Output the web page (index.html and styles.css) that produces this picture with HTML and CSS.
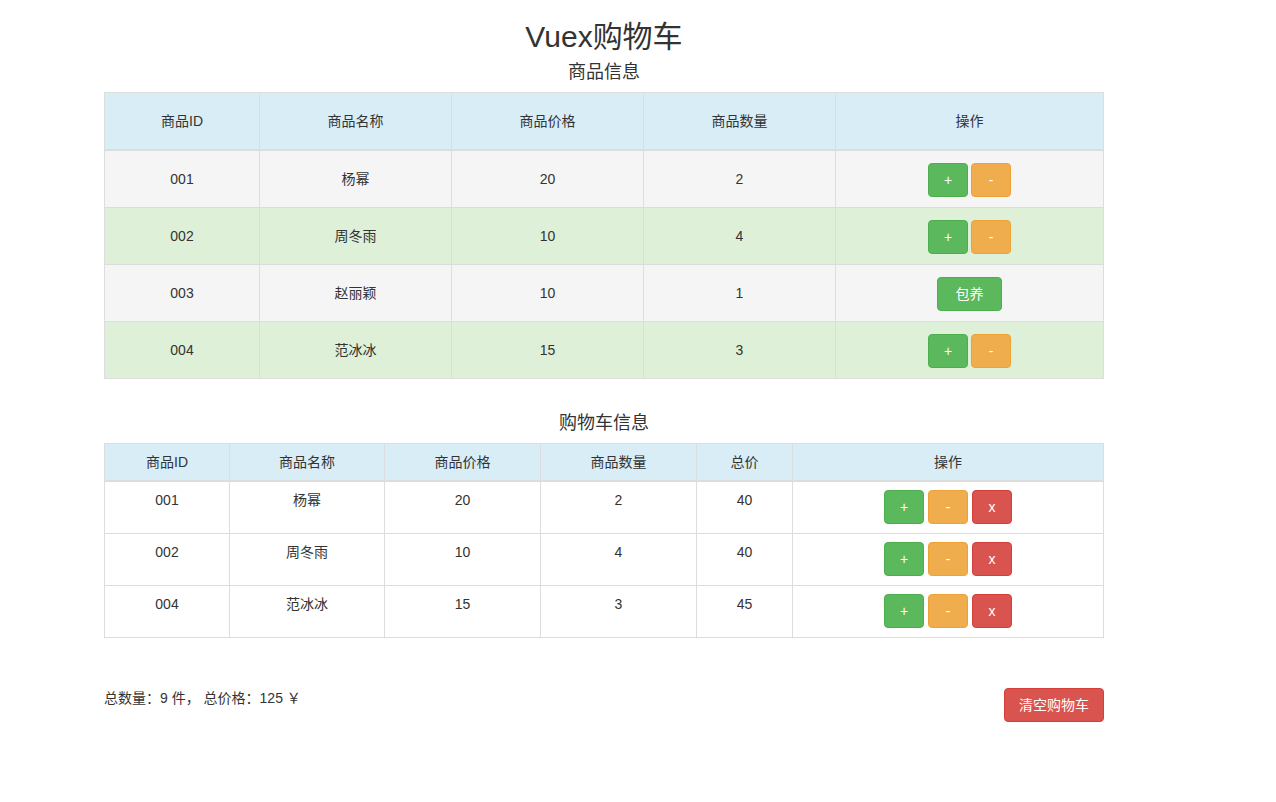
FILE: index.html
```html
<!DOCTYPE html>
<html lang="zh-CN">
<head>
<meta charset="utf-8">
<title>Vuex购物车</title>
<link rel="stylesheet" href="styles.css">
</head>
<body>
<div class="container">
  <h2 class="title">Vuex购物车</h2>
  <h4 class="sub">商品信息</h4>
  <table class="tbl goods">
    <colgroup>
      <col class="g1"><col class="g2"><col class="g3"><col class="g4"><col class="g5">
    </colgroup>
    <thead>
      <tr class="info"><th>商品ID</th><th>商品名称</th><th>商品价格</th><th>商品数量</th><th>操作</th></tr>
    </thead>
    <tbody>
      <tr class="active"><td>001</td><td>杨幂</td><td>20</td><td>2</td><td><div class="ops ops3"><button class="btn btn-success sq">+</button><button class="btn btn-warning sq">-</button></div></td></tr>
      <tr class="success"><td>002</td><td>周冬雨</td><td>10</td><td>4</td><td><div class="ops ops3"><button class="btn btn-success sq">+</button><button class="btn btn-warning sq">-</button></div></td></tr>
      <tr class="active"><td>003</td><td>赵丽颖</td><td>10</td><td>1</td><td><div class="ops ops3"><button class="btn btn-success wide">包养</button></div></td></tr>
      <tr class="success"><td>004</td><td>范冰冰</td><td>15</td><td>3</td><td><div class="ops ops3"><button class="btn btn-success sq">+</button><button class="btn btn-warning sq">-</button></div></td></tr>
    </tbody>
  </table>

  <h4 class="sub sub2">购物车信息</h4>
  <table class="tbl cart">
    <colgroup>
      <col class="c1"><col class="c2"><col class="c3"><col class="c4"><col class="c5"><col class="c6">
    </colgroup>
    <thead>
      <tr class="info"><th>商品ID</th><th>商品名称</th><th>商品价格</th><th>商品数量</th><th>总价</th><th>操作</th></tr>
    </thead>
    <tbody>
      <tr><td>001</td><td>杨幂</td><td>20</td><td>2</td><td>40</td><td><div class="ops"><button class="btn btn-success sq">+</button><button class="btn btn-warning sq">-</button><button class="btn btn-danger sq">x</button></div></td></tr>
      <tr><td>002</td><td>周冬雨</td><td>10</td><td>4</td><td>40</td><td><div class="ops"><button class="btn btn-success sq">+</button><button class="btn btn-warning sq">-</button><button class="btn btn-danger sq">x</button></div></td></tr>
      <tr><td>004</td><td>范冰冰</td><td>15</td><td>3</td><td>45</td><td><div class="ops"><button class="btn btn-success sq">+</button><button class="btn btn-warning sq">-</button><button class="btn btn-danger sq">x</button></div></td></tr>
    </tbody>
  </table>

  <div class="footer">
    <span class="summary">总数量：9 件， 总价格：125 ￥</span>
    <button class="btn btn-danger clear">清空购物车</button>
  </div>
</div>
</body>
</html>
```

FILE: styles.css
```css
html, body {
  margin: 0;
  padding: 0;
  background: #fff;
}
body {
  font-family: "Liberation Sans", Arial, "Noto Sans CJK SC", sans-serif;
  font-size: 14px;
  line-height: 20px;
  color: #333;
}
.container {
  width: 1000px;
  margin-left: 104px;
}
.title {
  font-size: 30px;
  line-height: 33px;
  font-weight: normal;
  text-align: center;
  margin: 20px 0 0;
}
.sub {
  font-size: 18px;
  line-height: 20px;
  font-weight: normal;
  text-align: center;
  margin: 9px 0 10px;
}
.sub2 {
  margin: 34px 0 10px;
}
.tbl {
  width: 999px;
  border-collapse: collapse;
  border-spacing: 0;
  border: 1px solid #ddd;
  table-layout: fixed;
}
.tbl th, .tbl td {
  border: 1px solid #ddd;
  text-align: center;
  font-weight: normal;
  padding: 8px;
}
.tbl thead th {
  border-bottom-width: 2px;
}
.g1 { width: 155px; }
.g2 { width: 192px; }
.g3 { width: 192px; }
.g4 { width: 192px; }
.g5 { width: 268px; }
.c1 { width: 125px; }
.c2 { width: 155px; }
.c3 { width: 156px; }
.c4 { width: 156px; }
.c5 { width: 96px; }
.c6 { width: 311px; }

.goods th, .goods td {
  vertical-align: middle;
  padding: 0 8px;
}
.goods thead th {
  height: 56px;
}
.goods tbody td {
  height: 56px;
}
.cart td {
  vertical-align: top;
  padding-bottom: 9px;
}
.info th { background: #d9edf7; }
.active td { background: #f5f5f5; }
.success td { background: #dff0d8; }

.ops {
  display: flex;
  justify-content: center;
  gap: 4px;
}
.ops3 {
  gap: 3px;
  padding-top: 2px;
}
.btn {
  display: inline-block;
  font-family: inherit;
  font-size: 14px;
  line-height: 20px;
  padding: 6px 12px;
  border: 1px solid transparent;
  border-radius: 4px;
  color: #fff;
  cursor: pointer;
  margin: 0;
}
.btn.sq {
  width: 40px;
  padding: 6px 0;
}
.btn.wide {
  width: 65px;
  padding: 6px 0;
}
.btn-success { background: #5cb85c; border-color: #4cae4c; }
.btn-warning { background: #f0ad4e; border-color: #eea236; }
.btn-danger { background: #d9534f; border-color: #d43f3a; }

.footer {
  display: flex;
  justify-content: space-between;
  align-items: flex-start;
  margin-top: 50px;
}
.summary {
  line-height: 20px;
}
.btn.clear {
  width: 100px;
  padding: 6px 0;
  line-height: 20px;
}
```
